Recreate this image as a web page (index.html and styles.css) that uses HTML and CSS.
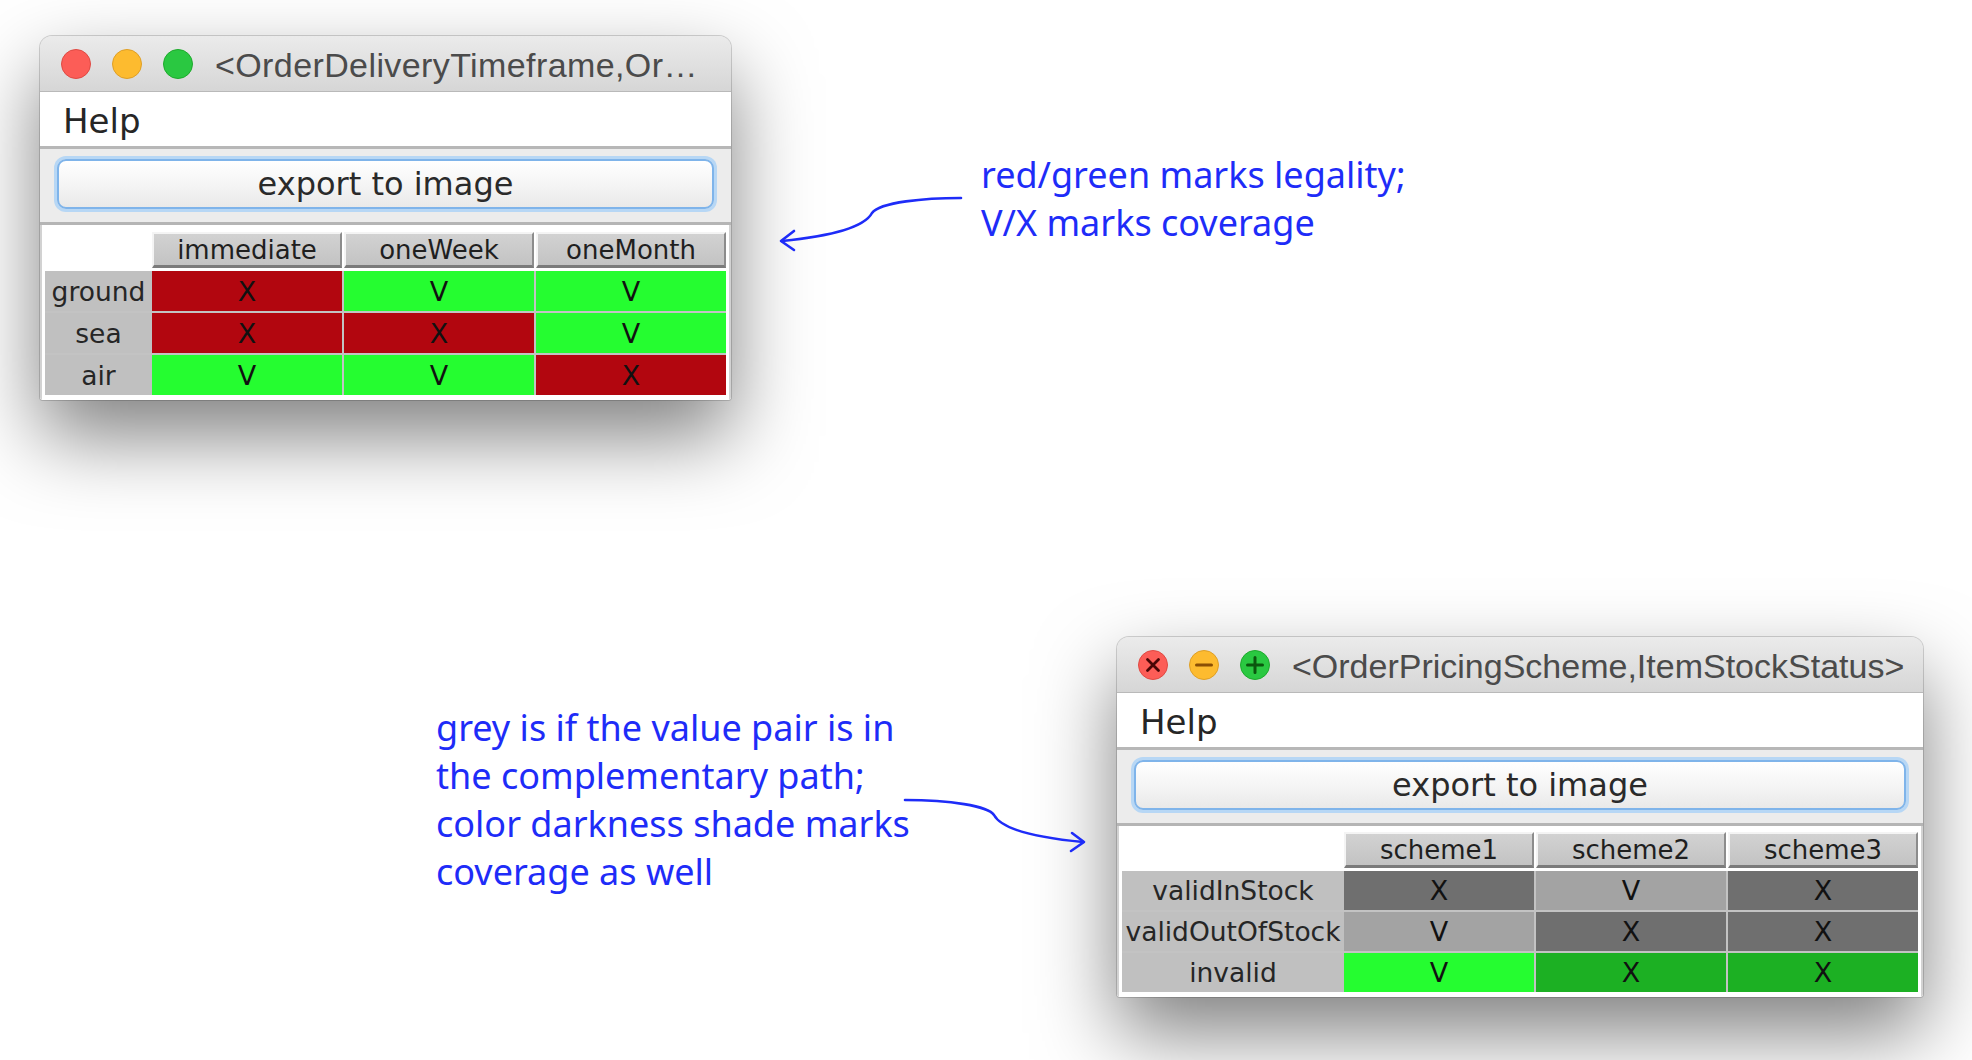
FILE: index.html
```html
<!DOCTYPE html>
<html>
<head>
<meta charset="utf-8">
<title>Combinatorial coverage views</title>
<link rel="stylesheet" href="styles.css">
</head>
<body>
<div class="desk">

  <div class="window w1">
    <div class="titlebar">
      <div class="lights">
        <span class="light red"></span>
        <span class="light yellow"></span>
        <span class="light green"></span>
      </div>
      <div class="title">&lt;OrderDeliveryTimeframe,Or…</div>
    </div>
    <div class="menubar"><span class="menu">Help</span></div>
    <div class="toolbar"><button class="export">export to image</button></div>
    <div class="tablepanel">
      <div class="thead">
        <div class="corner"></div>
        <div class="th">immediate</div>
        <div class="th">oneWeek</div>
        <div class="th">oneMonth</div>
      </div>
      <div class="tbody">
        <div class="rh">ground</div>
        <div class="td c-red">X</div>
        <div class="td c-green">V</div>
        <div class="td c-green">V</div>
        <div class="rh">sea</div>
        <div class="td c-red">X</div>
        <div class="td c-red">X</div>
        <div class="td c-green">V</div>
        <div class="rh">air</div>
        <div class="td c-green">V</div>
        <div class="td c-green">V</div>
        <div class="td c-red">X</div>
      </div>
    </div>
  </div>

  <div class="window w2">
    <div class="titlebar">
      <div class="lights">
        <span class="light red"><svg viewBox="0 0 30 30" class="glyph"><path d="M9.5 9.5 L20.5 20.5 M20.5 9.5 L9.5 20.5" stroke="#4a0606" stroke-width="2.8" stroke-linecap="round"/></svg></span>
        <span class="light yellow"><svg viewBox="0 0 30 30" class="glyph"><path d="M7.5 15 L22.5 15" stroke="#8a4f05" stroke-width="3" stroke-linecap="round"/></svg></span>
        <span class="light green"><svg viewBox="0 0 30 30" class="glyph"><path d="M7.5 15 L22.5 15 M15 7.5 L15 22.5" stroke="#0b560e" stroke-width="3" stroke-linecap="round"/></svg></span>
      </div>
      <div class="title">&lt;OrderPricingScheme,ItemStockStatus&gt;</div>
    </div>
    <div class="menubar"><span class="menu">Help</span></div>
    <div class="toolbar"><button class="export">export to image</button></div>
    <div class="tablepanel">
      <div class="thead">
        <div class="corner"></div>
        <div class="th">scheme1</div>
        <div class="th">scheme2</div>
        <div class="th">scheme3</div>
      </div>
      <div class="tbody">
        <div class="rh">validInStock</div>
        <div class="td c-dark">X</div>
        <div class="td c-light">V</div>
        <div class="td c-dark">X</div>
        <div class="rh">validOutOfStock</div>
        <div class="td c-light">V</div>
        <div class="td c-dark">X</div>
        <div class="td c-dark">X</div>
        <div class="rh">invalid</div>
        <div class="td c-green">V</div>
        <div class="td c-dgreen">X</div>
        <div class="td c-dgreen">X</div>
      </div>
    </div>
  </div>

  <div class="note note1">
    <div>red/green marks legality;</div>
    <div>V/X marks coverage</div>
  </div>

  <div class="note note2">
    <div>grey is if the value pair is in</div>
    <div>the complementary path;</div>
    <div>color darkness shade marks</div>
    <div>coverage as well</div>
  </div>

  <svg class="arrows" viewBox="0 0 1972 1060" width="1972" height="1060">
    <path d="M961 198 C 925 198, 880 202, 872 213 C 864 228, 830 236, 782 241" fill="none" stroke="#1e2cf8" stroke-width="2.6" stroke-linecap="round"/>
    <path d="M794 231 L781 241 L794 250" fill="none" stroke="#1e2cf8" stroke-width="2.6" stroke-linecap="round" stroke-linejoin="round"/>
    <path d="M905 800 C 950 800, 988 806, 994 815 C 1002 830, 1040 838, 1083 842" fill="none" stroke="#1e2cf8" stroke-width="2.6" stroke-linecap="round"/>
    <path d="M1072 833 L1084 842 L1071 851" fill="none" stroke="#1e2cf8" stroke-width="2.6" stroke-linecap="round" stroke-linejoin="round"/>
  </svg>

</div>
</body>
</html>
```

FILE: styles.css
```css
html, body {
  margin: 0;
  padding: 0;
  background: #ffffff;
}

.desk {
  position: relative;
  width: 1972px;
  height: 1060px;
  overflow: hidden;
  background: #ffffff;
}

/* ---------- window ---------- */
.window {
  position: absolute;
  display: flex;
  flex-direction: column;
  background: #ececec;
  border-radius: 12px 12px 3px 3px;
  box-shadow: 0 36px 80px rgba(0, 0, 0, 0.5), 0 0 0 1px rgba(0, 0, 0, 0.16);
  overflow: hidden;
}

.w1 {
  left: 40px;
  top: 36px;
  width: 691px;
  --rowhead: 105px;
  --rowh: 40px;
  --padtop: 7px;
}

.w2 {
  left: 1117px;
  top: 637px;
  width: 806px;
  --rowhead: 220px;
  --rowh: 39px;
  --padtop: 6px;
}

.titlebar {
  height: 56px;
  display: flex;
  align-items: center;
  padding-left: 21px;
  background: linear-gradient(#ebebeb, #d6d6d6);
  border-bottom: 1px solid #b9b9b9;
  box-sizing: border-box;
}

.lights {
  display: flex;
  gap: 21px;
  flex: none;
}

.light {
  width: 30px;
  height: 30px;
  border-radius: 50%;
  box-sizing: border-box;
  display: flex;
  align-items: center;
  justify-content: center;
}

.light.red { background: #fc5d57; border: 1px solid #df4a43; }
.light.yellow { background: #fdbb2f; border: 1px solid #df9f26; }
.light.green { background: #2ac841; border: 1px solid #1eaa2c; }

.glyph {
  width: 30px;
  height: 30px;
  display: block;
  flex: none;
}

.title {
  margin-left: 22px;
  margin-top: 4px;
  font-family: "Liberation Sans", Arial, sans-serif;
  font-size: 34px;
  color: #4b4b4b;
  white-space: nowrap;
  overflow: hidden;
}

.w1 .title {
  letter-spacing: 0.4px;
}

.menubar {
  height: 54px;
  background: #ffffff;
  display: flex;
  align-items: center;
  padding-left: 23px;
  border-bottom: 3px solid #b7b7b7;
}

.menu {
  font-family: "DejaVu Sans", Verdana, sans-serif;
  font-size: 34px;
  color: #262626;
  padding-top: 3px;
}

.toolbar {
  background: #ececec;
  padding: 10px 17px 13px 17px;
  border-bottom: 3px solid #b5b5b5;
}

.export {
  display: block;
  width: 100%;
  height: 50px;
  margin: 0;
  border: 2px solid #7fb4ea;
  border-radius: 9px;
  box-shadow: 0 0 0 3px #b7d7f5;
  background: linear-gradient(#ffffff, #f4f4f4 55%, #e9e9e9);
  font-family: "DejaVu Sans", Verdana, sans-serif;
  font-size: 32px;
  color: #2a2a2a;
  padding: 0;
  line-height: 44px;
}

/* ---------- table ---------- */
.tablepanel {
  background: #ffffff;
  padding: var(--padtop) 3px 5px 3px;
  border-left: 2px solid #d2d2d2;
  border-right: 2px solid #d2d2d2;
}

.thead,
.tbody {
  display: grid;
  grid-template-columns: var(--rowhead) 1fr 1fr 1fr;
}

.thead {
  column-gap: 2px;
  height: 36px;
}

.corner {
  background: #ffffff;
}

.th {
  display: flex;
  align-items: center;
  justify-content: center;
  background: linear-gradient(#d2d2d2, #c3c3c3);
  border-top: 2px solid #f4f4f4;
  border-left: 2px solid #f4f4f4;
  border-right: 2px solid #8c8c8c;
  border-bottom: 3px solid #7b7b7b;
  font-family: "DejaVu Sans", Verdana, sans-serif;
  font-size: 26px;
  color: #1f1f1f;
  padding-top: 1px;
}

.tbody {
  margin-top: 3px;
  gap: 2px 2px;
  background: #c3c3c3;
}

.rh,
.td {
  height: var(--rowh);
  display: flex;
  align-items: center;
  justify-content: center;
  font-family: "DejaVu Sans", Verdana, sans-serif;
  font-size: 27px;
  white-space: nowrap;
}

.rh {
  background: #c0c0c0;
  color: #262626;
  margin-right: -2px;
  font-size: 26.5px;
}

.td {
  color: #111111;
}

.c-red { background: #b2060f; }
.c-green { background: #25fd30; }
.c-dgreen { background: #1cb023; }
.c-dark { background: #6f6f6f; }
.c-light { background: #a3a3a3; }

/* ---------- annotations ---------- */
.note {
  position: absolute;
  font-family: "Comic Sans MS", "Noto Sans", sans-serif;
  font-size: 36px;
  line-height: 48px;
  color: #1e2cf8;
  white-space: nowrap;
}

.note1 {
  left: 981px;
  top: 151px;
}

.note2 {
  left: 436px;
  top: 704px;
}

.arrows {
  position: absolute;
  left: 0;
  top: 0;
  pointer-events: none;
}
```
